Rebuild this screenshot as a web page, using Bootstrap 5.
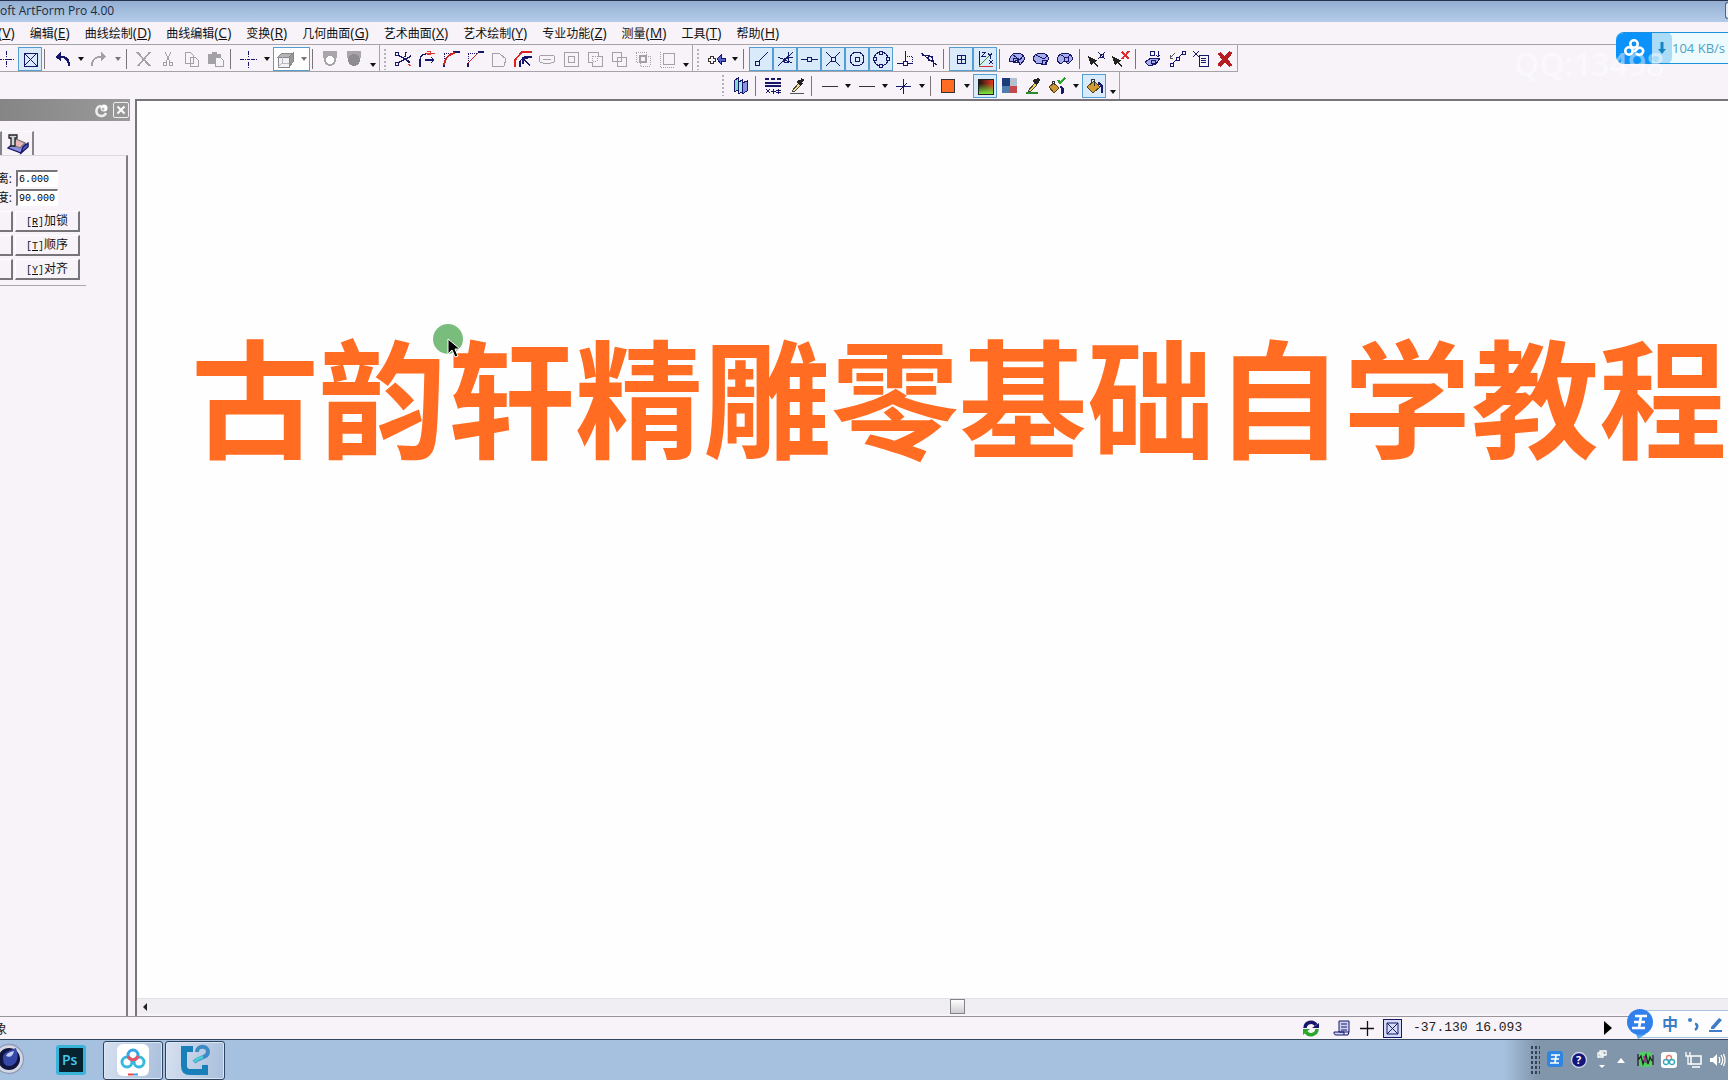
<!DOCTYPE html>
<html lang="zh-CN">
<head>
<meta charset="utf-8">
<meta name="viewport" content="width=device-width, initial-scale=1">
<title>ArtForm Pro 4.00</title>
<link rel="stylesheet" href="https://cdn.jsdelivr.net/npm/bootstrap@5.3.0/dist/css/bootstrap.min.css">
<style>
:root{--face:#f7f3f9;--navy:#16166b;--line:#a5a3a8}
body{background:var(--face);font-family:"Open Sans","Noto Sans CJK SC",sans-serif;font-size:12px;line-height:16px;color:#111}
button{border:0;background:none;padding:0;color:inherit;font:inherit}
svg{display:block;flex:none;fill:none;stroke:var(--navy);stroke-width:1.3}
.tb svg{stroke-width:1;shape-rendering:crispEdges}
.titlebar{height:22px;border-top:1px solid #26324d;background:linear-gradient(#93aed2,#b5cdea);font-size:12px;color:#1d2b40;padding-bottom:2px}
.winbtn{width:3px;height:17px;border:1px solid #4d6482;border-right:0;border-radius:3px 0 0 3px;background:#e4edf8}
.menus{height:22px;gap:15px;margin-left:-2px}
.menus button{white-space:nowrap}
.menus span{font-size:14px}
.tools{border-top:1px solid var(--line)}
.band{height:27px;border-right:1px solid var(--line);border-bottom:1px solid var(--line);padding-top:2px}
.band1{margin-left:-6px}
.band2{margin-left:718px;border-bottom:0;padding-top:0}
.tb{width:24px;height:24px;flex:none}
.tb.on{background:#d9ebfb;border:1px solid #559fd0}
.tb.on svg{margin:-1px}
.tc{width:13px;height:24px;flex:none;display:flex;align-items:center;justify-content:center}
.tc::after{content:"";border:3px solid transparent;border-top:4px solid #111;border-bottom:0}
.tc.dim::after{border-top-color:#777}
.tc.low{align-items:flex-end;padding-bottom:4px}
.combo{background:#fff;border:1px solid #559fd0;height:24px;width:37px}
.combo svg{margin:-1px}
.combo .tc{height:22px;width:12px}
.sp{width:8px;height:20px;flex:none;padding-left:2px}
.sp::before{content:"";display:block;width:1px;height:20px;background:#7d7478}
.grip{width:11px;height:21px;flex:none;padding-left:4px}
.grip::before{content:"";display:block;width:2px;height:21px;background:repeating-linear-gradient(#b4b1b7 0 2px,transparent 2px 4px)}
.g{stroke:#a3a1a5}
.dock{width:135px;flex:none}
.dockhead{width:130px;height:22px;background:linear-gradient(90deg,#858585,#9a9a9a);gap:4px;padding-right:1px}
.dockhead button{width:16px;height:16px;border:1px solid #eee;border-radius:2px}
.tabs{height:24px;margin-top:10px;margin-left:-1px}
.tabs button{border-top:1px solid #fff;border-right:2px solid #868389;height:24px}
.tabfirst{width:3px}
.tabform{padding:0 3px}
.pane{width:128px;border-top:1px solid #dcd9df;border-right:2px solid #7f7c82;padding-top:13px;overflow:hidden}
.mono{font-family:"Liberation Mono","Noto Sans CJK SC",monospace}
.frow{height:19px;margin-left:-18px;gap:4px}
.frow label{width:30px;text-align:right;white-space:nowrap}
.frow input{width:42px;height:17px;border:1px solid #fff;border-top:2px solid #77757a;border-left:2px solid #77757a;font-size:10px;padding:0 1px;background:#fff;color:#000}
.brow{margin-left:-52px;gap:2px;margin-top:3px}
.brow button{width:65px;height:21px;border:1px solid #fff;border-right:2px solid #77757a;border-bottom:2px solid #77757a;font-size:12px;line-height:17px;white-space:nowrap}
.brow button span{font-size:10px}
.gline{width:86px;border-bottom:1px solid #a9a6ac;padding:1px 0 5px}
.workrow{min-height:0}
.view{border-left:2px solid #77757a;border-top:2px solid #77757a;background:#fefefe;min-width:0}
.artwork{padding:229px 0 0 54px;font:700 128px/128px "Noto Sans CJK SC",sans-serif;color:#ff6c22;white-space:nowrap;overflow:hidden;margin:0}
.pointer{position:absolute;left:296px;top:223px}
.hbar{height:18px;background:#f1eef3;border-top:1px solid #e4e1e6;border-bottom:2px solid var(--face);padding-left:5px}
.thumb{width:15px;height:15px;border:1px solid #848289;background:linear-gradient(#fdfdfd,#cfcdd2);margin-left:50.6%}
.status{height:24px;border-top:1px solid #97949a;border-bottom:1px solid #34455f;padding-right:116px;color:#222}
.state{margin-left:-6px;font-size:13px}
.sicons{gap:9px}
.coord{font-size:13px;width:182px;margin-left:2px;white-space:pre}
.sbox{border:1px solid var(--navy);background:#d3dcf4}
.task{height:40px;background:linear-gradient(90deg,#a6c1df 0 87%,#8296ab 89%)}
.taskicons{gap:2px}
.disc{margin-right:30px}
.photo{margin-right:15px}
.tk{width:60px;height:39px;border:1px solid #2f435e;border-radius:3px;background:linear-gradient(100deg,#d6e0f0,#a9bfdc);box-shadow:inset 0 0 0 1px #dbe6f5}
.tray{gap:6px;padding-right:2px}
.dots{width:10px;height:30px;background:radial-gradient(#31415a 1px,transparent 1px) 0 0/4px 5px}
.net{position:absolute;left:calc(100% - 112px);right:0;top:32px;height:32px;border-radius:8px 0 0 8px;overflow:hidden;background:#edfbff;color:#4c9fc6;font-size:13px;white-space:nowrap;border-bottom:1px solid #1c91de;border-top:1px solid #1c91de}
.net i{width:36px;height:32px;background:#0b93fb;flex:none}
.net b{width:20px;height:32px;background:#aadcf8;flex:none;border-radius:0 6px 6px 0}
.stamp{position:absolute;right:0;top:46px;width:214px;font-size:32px;font-weight:600;line-height:36px;color:#fff;opacity:.45;overflow:hidden;white-space:nowrap;pointer-events:none}
.ime{position:absolute;right:0;bottom:41px;width:101px;height:30px;color:#3b7dc6}
.imepad{position:absolute;left:13px;right:0;top:1px;height:28px;background:#fdfdff;border:1px solid #a9c4e2;border-right:0;padding-left:21px;gap:8px;font-size:16px;font-weight:700}
.ball{position:absolute;left:0;top:0}
</style>
<script src="https://cdn.jsdelivr.net/npm/bootstrap@5.3.0/dist/js/bootstrap.bundle.min.js"></script>
</head>
<body class="vh-100 d-flex flex-column overflow-hidden position-relative">
<header class="titlebar d-flex align-items-center justify-content-between flex-shrink-0"><span>oft ArtForm Pro 4.00</span><span class="winbtn"></span></header>
<nav class="menus d-flex align-items-center flex-shrink-0">
<button><span>(<u>V</u>)</span></button><button>编辑<span>(<u>E</u>)</span></button><button>曲线绘制<span>(<u>D</u>)</span></button><button>曲线编辑<span>(<u>C</u>)</span></button><button>变换<span>(<u>R</u>)</span></button><button>几何曲面<span>(<u>G</u>)</span></button><button>艺术曲面<span>(<u>X</u>)</span></button><button>艺术绘制<span>(<u>Y</u>)</span></button><button>专业功能<span>(<u>Z</u>)</span></button><button>测量<span>(<u>M</u>)</span></button><button>工具<span>(<u>T</u>)</span></button><button>帮助<span>(<u>H</u>)</span></button>
</nav>
<div class="tools flex-shrink-0">
<div class="d-flex">
<div class="band band1 d-flex align-items-center">
<button class="tb" aria-label="十字"><svg width="24" height="24"><path d="M4 12.500h6M14 12.500h6M12.500 4v6M12.500 14v6" stroke-dasharray="4 1"/><path d="M11 12.500h3"/></svg></button>
<button class="tb on" aria-label="选择框"><svg width="24" height="24"><path d="M6 6h13v13h-13zL19 19M19 6L6 19"/></svg></button>
<span class="sp"></span>
<button class="tb" aria-label="撤销"><svg width="24" height="24"><path d="M8 10c7-1 11 2 11 9" stroke-width="2.400"/><path d="M5 10l6-5v9z" fill="#16166b" stroke="none"/></svg></button><button class="tc" aria-label="撤销列表"></button>
<button class="tb" aria-label="重做"><svg class="g" width="24" height="24"><path d="M16 10c-7-1-11 2-11 9" stroke-width="2"/><path d="M19 10l-5-5v9z" fill="#a3a1a5" stroke="none"/></svg></button><button class="tc dim" aria-label="重做列表"></button>
<span class="sp"></span>
<button class="tb" aria-label="删除"><svg class="g" width="24" height="24"><path d="M5 5l13 14M18 5L6 19" stroke-width="1.800"/></svg></button>
<button class="tb" aria-label="剪切"><svg class="g" width="24" height="24"><path d="M9 5l5 10M15 5l-5 10"/><circle cx="9" cy="17" r="2"/><circle cx="15" cy="17" r="2"/></svg></button>
<button class="tb" aria-label="复制"><svg class="g" width="24" height="24"><path d="M5 5h5l3 3v8H5zM10 10h5l3 3v6h-8z" fill="#f7f3f9"/></svg></button>
<button class="tb" aria-label="粘贴"><svg class="g" width="24" height="24"><path d="M4 7h12v9H4zM8 5h4v3H8z" fill="#a3a1a5"/><path d="M11 10h5l3 3v6h-8z" fill="#f7f3f9"/></svg></button>
<span class="sp"></span>
<button class="tb" aria-label="捕捉"><svg width="24" height="24"><path d="M4 12.500h6M15 12.500h6M12.500 4v6M12.500 15v6" stroke-dasharray="4 1"/><path d="M11 12.500h3"/></svg></button><button class="tc" aria-label="捕捉列表"></button>
<div class="combo d-flex"><button class="tb" aria-label="视图"><svg class="g" width="24" height="24"><path d="M5 9l4-4h11l-4 4z" fill="#b5b5b8" stroke="#888"/><path d="M16 9l4-4v9l-4 5z" fill="#999" stroke="#888"/><path d="M5 9h11v10H5z" fill="#f2f1f6" stroke="#888"/><path d="M9 9v6h7M9 15l-4 4" stroke="#b8b8c4"/></svg></button><button class="tc dim" aria-label="视图列表"></button></div>
<span class="sp"></span>
<button class="tb" aria-label="遮罩"><svg width="24" height="24"><path d="M5 4h14v7H5z" fill="#a8a6aa" stroke="none"/><circle cx="12" cy="13" r="5" fill="#fff" stroke="#a8a6aa" stroke-width="2"/></svg></button>
<button class="tb" aria-label="实体"><svg width="24" height="24"><path d="M5 4h14v7H5z" fill="#a8a6aa" stroke="none"/><circle cx="12" cy="13" r="6" fill="#8e8c90" stroke="none"/></svg></button>
<button class="tc low" aria-label="更多"></button>
</div>
<div class="band d-flex align-items-center">
<span class="grip"></span>
<button class="tb" aria-label="修剪"><svg width="24" height="24"><path d="M7 8l12 7M7 16l13-7M15 5l-1 5M15 13l4 3" stroke-width="1.400"/><circle cx="6" cy="7" r="2"/><circle cx="6" cy="17" r="2"/><path d="M17 17l3 2" stroke="#d33"/></svg></button>
<button class="tb" aria-label="延伸"><svg width="24" height="24"><path d="M5 20v-6c0-5 2-7 6-7M10 13h9M16 10l3 3-3 3" stroke-width="1.400"/><path d="M11 6h9M12 4h3v3h-3" stroke="#d33"/></svg></button>
<button class="tb" aria-label="圆角"><svg width="24" height="24"><path d="M5 14V6h9" stroke-dasharray="1 1"/><path d="M5 20v-4M14 5h7" stroke-width="1.500"/><path d="M5 18c1-7 4-11 11-12" stroke="#c22" stroke-width="1.800"/></svg></button>
<button class="tb" aria-label="倒角"><svg width="24" height="24"><path d="M5 14V6h9" stroke-dasharray="1 1"/><path d="M5 16L15 6" stroke="#c22"/><path d="M5 20v-4M15 5h6" stroke-width="1.500"/></svg></button>
<button class="tb" aria-label="闭合"><svg class="g" width="24" height="24"><path d="M5 6h7l7 6-2 7H5z"/></svg></button>
<button class="tb" aria-label="偏移"><svg width="24" height="24"><path d="M4 20v-7l7-8h10" stroke="#d22" stroke-width="1.800"/><path d="M9 20v-6l4-4h8M12 11l7 8M12 17v-6h5" stroke-width="1.400"/></svg></button>
<button class="tb" aria-label="槽"><svg class="g" width="24" height="24"><rect x="4" y="8" width="16" height="8" rx="4"/><path d="M8 12h8"/></svg></button>
<button class="tb" aria-label="等距"><svg class="g" width="24" height="24"><path d="M5 5h14v14H5zM9 9h6v6H9z"/></svg></button>
<button class="tb" aria-label="并集"><svg class="g" width="24" height="24"><path d="M5 5h10v4h4v10H9v-4H5z"/><path d="M9 14V9h5v5z" stroke-dasharray="1 1"/></svg></button>
<button class="tb" aria-label="差集"><svg class="g" width="24" height="24"><path d="M5 5h9v9H5zM10 10h9v9h-9z"/></svg></button>
<button class="tb" aria-label="交集"><svg class="g" width="24" height="24"><path d="M5 5h10v10H5zM9 9h10v10H9z" stroke-dasharray="1 1"/><path d="M9 9h6v6H9z" stroke-width="2"/></svg></button>
<button class="tb" aria-label="复合"><svg class="g" width="24" height="24"><path d="M8 6h11v11H8z"/><path d="M5 5v15h14" stroke-dasharray="1 1"/></svg></button>
<button class="tc low" aria-label="更多"></button>
</div>
<div class="band d-flex align-items-center">
<span class="grip"></span>
<button class="tb" aria-label="移动"><svg width="24" height="24"><path d="M4 11h2V9h3v2h2v3H9v2H6v-2H4z" stroke="#333"/><path d="M13 12l4-4v3h4v3h-4v3z" fill="#5564c8"/></svg></button><button class="tc" aria-label="移动列表"></button>
<span class="sp"></span>
<button class="tb on" aria-label="端点"><svg width="24" height="24"><path d="M9 15L19 5M6 14h4v4H6z"/></svg></button>
<button class="tb on" aria-label="最近点"><svg width="24" height="24"><path d="M5 19L20 5M5 10l14 6M15 5v5h5M11 11h4v4h-4z"/></svg></button>
<button class="tb on" aria-label="中点"><svg width="24" height="24"><path d="M4 12h6M14 12h7M10 10h4v4h-4z"/></svg></button>
<button class="tb on" aria-label="交点"><svg width="24" height="24"><path d="M5 5l14 14M19 5L5 19"/><path d="M10 10h4v4h-4z" fill="#d9ebfb"/></svg></button>
<button class="tb on" aria-label="圆心"><svg width="24" height="24"><circle cx="12" cy="12" r="7"/><path d="M10 10h4v4h-4z"/></svg></button>
<button class="tb on" aria-label="象限点"><svg width="24" height="24"><circle cx="12" cy="12" r="7"/><path d="M10 4h3v3h-3zM10 17h3v3h-3zM4 10h3v3H4zM17 10h3v3h-3z" fill="#d9ebfb"/></svg></button>
<button class="tb" aria-label="垂足"><svg width="24" height="24"><path d="M4 16h6M14 16h6M12 4v10M10 14h4v4h-4z"/><path d="M14 9h5v6" stroke-dasharray="1 1"/></svg></button>
<button class="tb" aria-label="切点"><svg width="24" height="24"><path d="M4 6l16 12M5 9c7-3 12 1 12 11M11 9h4v4h-4z"/></svg></button>
<span class="sp"></span>
<button class="tb on" aria-label="网格"><svg width="24" height="24"><path d="M8 8h8v8H8zM12 8v8M8 12h8"/></svg></button>
<button class="tb on" aria-label="坐标轴"><svg width="24" height="24"><path d="M6 4v15"/><path d="M6 19L16 9" stroke="#2a9a3a"/><path d="M6 19h14" stroke="#c33"/><path d="M9 5h4l-4 4h4M15 6l2 3 2-3M17 9v3M16 13l4 4M20 13l-4 4"/></svg></button>
<span class="sp"></span>
<button class="tb" aria-label="曲面一"><svg width="24" height="24"><path d="M4 14c1-5 4-8 8-8 4 0 7 3 8 6l-5 6-2-5-5 2z" fill="#a6ade8"/><path d="M8 8l7 5 3-4M8 11h4v4H8z"/></svg></button>
<button class="tb" aria-label="曲面二"><svg width="24" height="24"><path d="M4 12c1-4 4-6 8-6 4 0 7 3 8 6l-5 6-5-2-3 0z" fill="#a6ade8"/><path d="M7 8l8 4 3-3M13 13h4v4h-4z"/></svg></button>
<button class="tb" aria-label="曲面三"><svg width="24" height="24"><path d="M4 13c1-5 4-7 8-7 4 0 7 3 8 6l-5 5-3-3-5 3z" fill="#a6ade8"/><path d="M8 8l5 3 5-3M11 10h4v4h-4z"/></svg></button>
<span class="sp"></span>
<button class="tb" aria-label="选点"><svg width="24" height="24"><path d="M3 9l10 5-4 1 4 4-1 1-4-4-2 3z" fill="#222" stroke="none"/><path d="M13 5l7 7M20 5l-7 7M15 7h3v3h-3z"/></svg></button>
<button class="tb" aria-label="取消选点"><svg width="24" height="24"><path d="M3 9l10 5-4 1 4 4-1 1-4-4-2 3z" fill="#222" stroke="none"/><path d="M13 5l7 7M20 4l-7 8" stroke="#e02a2a" stroke-width="1.800"/></svg></button>
<span class="sp"></span>
<button class="tb" aria-label="投影"><svg width="24" height="24"><path d="M4 15l6-4h9l-4 6-7 2z" fill="#a6ade8"/><path d="M9 4h4v4H9zM17 4v6M15 8l2 2 2-2M10 13h4v3h-4z"/></svg></button>
<button class="tb" aria-label="节点"><svg width="24" height="24"><path d="M8 16l3-3M14 10l3-3M5 16h3v3H5zM11 10h3v3h-3zM17 4h3v3h-3z"/><path d="M10 6l-5 5v-3M5 11h3" stroke="#555"/></svg></button>
<button class="tb" aria-label="列表"><svg width="24" height="24"><path d="M10 8h9v11h-9zM12 11h5M12 13h5M12 15h5M4 4l6 6M10 4l-6 6"/></svg></button>
<button class="tb" aria-label="清除"><svg width="24" height="24"><path d="M6 6l12 13M18 5L6 19" stroke="#b61c20" stroke-width="4"/></svg></button>
</div>
</div>
<div class="d-flex">
<div class="band band2 d-flex align-items-center">
<span class="grip"></span>
<button class="tb" aria-label="图层"><svg width="24" height="24"><path d="M5 7l4-3v12l-4 2z" fill="#7fdcc6"/><path d="M9 9l4-3v12l-4 2z" fill="#a9e6ef"/><path d="M13 9l5-2v10l-5 3z" fill="#8b93e0"/></svg></button>
<span class="sp"></span>
<button class="tb" aria-label="线型"><svg width="24" height="24"><path d="M4 5h16" stroke-width="2" stroke-dasharray="4 2"/><path d="M4 9h16M4 12h16" stroke-width="1.500"/><path d="M5 15l4 4M9 15l-4 4M12 15v5M10 17h5M17 15v5M15 16l5 3M20 16l-5 3"/></svg></button>
<button class="tb" aria-label="拾取"><svg width="24" height="24"><path d="M7 17l7-8 2 2-7 7z" fill="#f4e38a" stroke="#444"/><path d="M13 7l4 4M15 9l3-4" stroke="#222" stroke-width="3"/><path d="M5 19h14" stroke="#555"/></svg></button>
<span class="sp"></span>
<button class="tb" aria-label="线宽"><svg width="24" height="24"><path d="M5 12.500h16" stroke="#333"/></svg></button><button class="tc" aria-label="线宽列表"></button>
<button class="tb" aria-label="线样式"><svg width="24" height="24"><path d="M5 12.500h16" stroke="#333"/></svg></button><button class="tc" aria-label="样式列表"></button>
<button class="tb" aria-label="点样式"><svg width="24" height="24"><path d="M5 12.500h15M12.500 5v15M9 16l7-7"/></svg></button><button class="tc" aria-label="点列表"></button>
<span class="sp"></span>
<button class="tb" aria-label="颜色"><svg width="24" height="24"><path d="M5.500 5.500h13v13h-13z" fill="#ff6c22" stroke="#333"/></svg></button><button class="tc" aria-label="颜色列表"></button>
<button class="tb on" aria-label="调色板"><svg width="24" height="24"><defs><linearGradient id="a"><stop stop-color="#111"/><stop offset="1" stop-color="#e53b20"/></linearGradient><linearGradient id="b" x2="0" y2="1"><stop offset=".3" stop-color="#3ce040" stop-opacity="0"/><stop offset="1" stop-color="#7dea3c"/></linearGradient></defs><path d="M5 5h15v15H5z" fill="url(#a)"/><path d="M5 5h15v15H5z" fill="url(#b)" stroke="#222"/></svg></button>
<button class="tb" aria-label="色块"><svg width="24" height="24" ><g stroke="none"><path d="M5 4h8v8H5z" fill="#1c3c78"/><path d="M13 4h7v8h-7z" fill="#b4bfd0"/><path d="M5 12h8v7H5z" fill="#4d7cae"/><path d="M13 12h7v7h-7z" fill="#c5484c"/></g></svg></button>
<button class="tb" aria-label="吸管"><svg width="24" height="24"><path d="M5 19h12" stroke="#2b8a2b" stroke-width="2.500"/><path d="M7 17l7-8 2 2-7 7z" fill="#f4d84a" stroke="#444"/><path d="M13 6l4 4M15 8l3-3" stroke="#222" stroke-width="3"/></svg></button>
<button class="tb" aria-label="填充确认"><svg width="24" height="24"><path d="M4 13l5-4 5 5-5 5z" fill="#c99838" stroke="#5c3d10"/><path d="M7 10V7h2v4" stroke="#333"/><path d="M15 13c3 0 3 3 2 7" stroke-width="2.500"/><path d="M13 6l2 3 5-5" stroke="#2ba02b" stroke-width="2"/></svg></button><button class="tc" aria-label="填充列表"></button>
<button class="tb on" aria-label="填充"><svg width="24" height="24"><path d="M5 13l7-6 6 6-7 6z" fill="#d19c35" stroke="#5c3d10"/><path d="M9 9V5h3v7" stroke="#333"/><path d="M16 9c4 1 5 4 4 10" stroke-width="2.500"/></svg></button>
<button class="tc low" aria-label="更多"></button>
</div>
</div>
</div>
<main class="workrow d-flex flex-grow-1">
<aside class="dock d-flex flex-column">
<div class="dockhead d-flex align-items-center justify-content-end flex-shrink-0"><svg width="14" height="16"><path d="M6 4a5 5 0 1 0 5 7" stroke="#eee" stroke-width="2.500"/><circle cx="9" cy="6" r="3.500" fill="#fff" stroke="none"/><circle cx="8" cy="7" r="1.500" fill="#bbb" stroke="none"/></svg><button aria-label="关闭"><svg width="14" height="14"><path d="M3.500 3.500l7 7M10.500 3.500l-7 7" stroke="#fff" stroke-width="2"/></svg></button></div>
<div class="tabs d-flex flex-shrink-0"><button class="tabfirst" aria-label="前一页"></button><button class="tabform" aria-label="变换页"><svg width="24" height="24"><path d="M3 16l8-7 12 4-7 8z" fill="#8c92e0"/><path d="M11 7l9 4-5 5-7-3z" fill="#eab5b8" stroke="#777"/><path d="M16 21l2-6 5-4v4z" fill="#5a5fb8"/><path d="M4 3h8v3h-2v8H6V6H4z" fill="#cfd4d8" stroke="#222"/></svg></button></div>
<section class="pane flex-grow-1">
<div class="frow d-flex align-items-center"><label for="dist">距离:</label><input id="dist" class="mono" value="6.000"></div>
<div class="frow d-flex align-items-center"><label for="ang">角度:</label><input id="ang" class="mono" value="90.000"></div>
<div class="gline overflow-hidden">
<div class="brow d-flex"><button aria-label="操作一"></button><button><span class="mono">[<u>R</u>]</span>加锁</button></div>
<div class="brow d-flex"><button aria-label="操作二"></button><button><span class="mono">[<u>T</u>]</span>顺序</button></div>
<div class="brow d-flex"><button aria-label="操作三"></button><button><span class="mono">[<u>Y</u>]</span>对齐</button></div>
</div>
</section>
</aside>
<section class="view flex-grow-1 d-flex flex-column position-relative">
<h1 class="artwork flex-grow-1">古韵轩精雕零基础自学教程</h1>
<svg class="pointer" width="32" height="36"><circle cx="15" cy="15" r="15" fill="#78bd7b" stroke="none"/><path d="M15 15v15l4-4 3 7 3-1-3-7h5z" fill="#000" stroke="#fff" stroke-width="1"/></svg>
<div class="hbar d-flex align-items-center flex-shrink-0"><svg width="5" height="8"><path d="M5 0v8L1 4z" fill="#222" stroke="none"/></svg><span class="thumb"></span></div>
</section>
</main>
<footer class="status d-flex align-items-center justify-content-between flex-shrink-0">
<span class="state">象</span>
<div class="sicons d-flex align-items-center">
<svg width="18" height="18"><path d="M3 9a6 6 0 0 1 11-3" stroke-width="3.500"/><path d="M15 10a6 6 0 0 1-11 3" stroke="#2aa62a" stroke-width="3.500"/><path d="M10 9h7V4z" fill="#16166b" stroke="none"/><path d="M8 10H1v6z" fill="#2aa62a" stroke="none"/></svg>
<svg class="ms-1" width="18" height="18"><path d="M6 2h10v11H6zM1 13h10v3H3c-2 0-2-2-2-3zM11 16h4l1-3M8 5h6M8 8h6M8 11h6" fill="#cdd4f2" stroke-width="1"/></svg>
<svg width="14" height="18"><path d="M0 9.500h14M7.500 2v15" stroke="#111"/></svg>
<svg class="sbox" width="19" height="19"><path d="M3 3h11v11H3zL14 14M14 3L3 14" stroke-width="1"/></svg>
<span class="coord mono">-37.130 16.093</span>
<svg width="8" height="14"><path d="M0 0l8 7-8 7z" fill="#000" stroke="none"/></svg>
</div>
</footer>
<div class="task d-flex justify-content-between align-items-center flex-shrink-0">
<div class="taskicons d-flex align-items-center">
<svg class="disc" width="24" height="34"><circle cx="9" cy="16" r="14.500" fill="#d5d9e4" stroke="#8f9bb8"/><circle cx="9" cy="16" r="11" fill="#10153f" stroke="none"/><path d="M3 15c0-6 6-7 13-10 4 10 0 18-7 18-4 0-6-3-6-8z" fill="#3548a8" stroke="none"/><path d="M6 13c1-3 4-4 8-5-1 5-4 7-8 5z" fill="#c6cff2" stroke="none"/></svg>
<svg class="photo" width="30" height="30"><rect width="30" height="30" rx="3" fill="#37b4d8" stroke="none"/><path d="M3 3h24v24H3z" fill="#06232f" stroke="none"/><text x="6" y="20" fill="#45c6ee" stroke="none" font-size="14" font-weight="600">Ps</text></svg>
<button class="tk d-flex align-items-center justify-content-center" aria-label="网盘"><svg width="32" height="34"><rect y="1" width="32" height="32" rx="6" fill="#fff" stroke="none"/><g stroke-width="3"><circle cx="16" cy="12" r="5" stroke="#36a4e8"/><circle cx="10" cy="19" r="5" stroke="#36b9df"/><circle cx="22" cy="19" r="5" stroke="#36b9df"/><path d="M11 13c1 4 8 6 10 0" stroke="#ef5264"/></g><path d="M11 31.500h5" stroke="#e44" stroke-width="2"/><path d="M16 31.500h5" stroke="#36a4e8" stroke-width="2"/></svg></button>
<button class="tk d-flex align-items-center justify-content-center" aria-label="雕刻"><svg width="32" height="34"><path d="M14 6H5v17c0 4 2 6 6 6h15v-7" stroke="#197fb9" stroke-width="6"/><path d="M18 9c0-7 11-7 11 0 0 6-9 5-14 10" stroke="#3e8ac6" stroke-width="4"/><path d="M24 14c-4 1-6 2-9 5" stroke="#48cbd2" stroke-width="3"/></svg></button>
</div>
<div class="tray d-flex align-items-center">
<span class="dots"></span>
<svg width="18" height="18"><rect width="16" height="16" x="1" rx="3" fill="#2f86e0" stroke="none"/><path d="M5 4h9M5 8h8M4 12h9M10 4l-1 8" stroke="#fff" stroke-width="1.700"/></svg>
<svg width="18" height="18"><circle cx="9" cy="9" r="7.500" fill="#15157c" stroke="#cdd4e6"/><text x="6" y="13" fill="#fff" stroke="none" font-size="11" font-weight="700">?</text></svg>
<svg width="16" height="22"><path d="M6 2h6v4H6zM4 4h5v4H4z" stroke="#fff"/><path d="M5 16h6l-3 3z" fill="#fff" stroke="none"/></svg>
<svg width="10" height="8"><path d="M1 7l4-5 4 5z" fill="#fff" stroke="none"/></svg>
<svg width="18" height="18" class="ms-1"><rect x="3" y="1" width="13" height="15" rx="3" fill="#52cf63" stroke="none"/><path d="M2 3v12M2 9l3-4 2 8 3-9 2 9 2-7 2 4M17 4v10" stroke="#222"/><path d="M8 5l2 7" stroke="#a2309a" stroke-width="2"/></svg>
<svg width="18" height="18"><rect x="1" y="1" width="16" height="16" rx="3" fill="#fff" stroke="none"/><circle cx="9" cy="7" r="2.500" stroke="#e76"/><circle cx="6" cy="11" r="2.500" stroke="#3ab"/><circle cx="12" cy="11" r="2.500" stroke="#3ab"/></svg>
<svg width="18" height="18"><path d="M7 5h10v8H7zM8 16h8" stroke="#fff" stroke-width="1.500"/><path d="M2 1v4h4V1M4 5v8h4" stroke="#fff"/></svg>
<svg width="18" height="18"><path d="M2 7h3l4-4v12l-4-4H2z" fill="#fff" stroke="none"/><path d="M11 6c1 2 1 4 0 6M13 4c2 3 2 7 0 10M15.500 3c2 4 2 8 0 12" stroke="#fff"/></svg>
</div>
</div>
<div class="net d-flex align-items-center"><i class="d-flex align-items-center justify-content-center"><svg width="22" height="20"><g stroke="#fff" stroke-width="2.600"><circle cx="11" cy="6" r="3.700"/><circle cx="6" cy="13" r="3.700"/><path d="M11 14l3-3c3-3 7 0 6 3s-5 4-7 1"/></g></svg></i><b class="d-flex align-items-center justify-content-center"><svg width="8" height="12"><path d="M4 0v9" stroke="#1384c4" stroke-width="3"/><path d="M0 7h8l-4 5z" fill="#1384c4" stroke="none"/></svg></b><span>104 KB/s</span></div>
<div class="stamp">QQ:13498</div>
<div class="ime"><div class="imepad d-flex align-items-center"><span>中</span><svg width="14" height="18"><circle cx="4" cy="5" r="2" fill="#3b7dc6" stroke="none"/><path d="M9 9c3 0 3 4 0 6" stroke="#3b7dc6" stroke-width="2.500"/></svg><svg width="16" height="18"><path d="M3 12l8-9 3 2-8 9H3z" fill="#3b7dc6" stroke="none"/><path d="M1 16h13" stroke="#3b7dc6" stroke-width="2"/></svg></div><svg class="ball" width="27" height="30"><path d="M9 25h10l-8 5z" fill="#4fa9ee" stroke="none"/><circle cx="13" cy="13" r="13" fill="#3181ec" stroke="none"/><path d="M8 7h12M7 13h11M5 19h13M14 7l-2 12" stroke="#fff" stroke-width="2.600"/></svg></div>
</body>
</html>
